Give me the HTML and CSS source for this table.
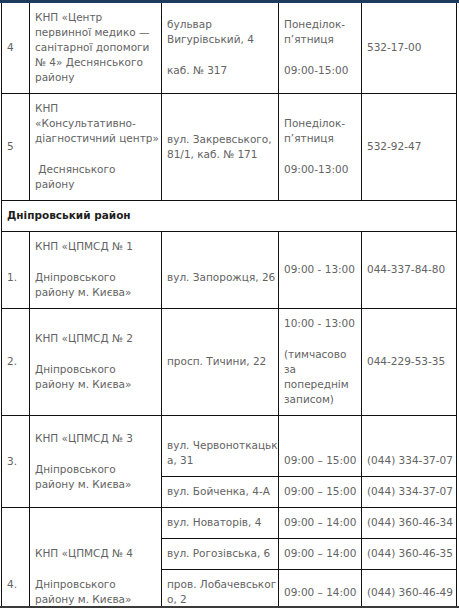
FILE: index.html
```html
<!DOCTYPE html>
<html lang="uk">
<head>
<meta charset="utf-8">
<title>КНП ЦПМСД</title>
<link rel="stylesheet" href="styles.css">
</head>
<body>
<div class="page">
  <div class="band"></div>
  <div class="viewport">
    <table class="clinics">
      <colgroup>
        <col class="c-num">
        <col class="c-name">
        <col class="c-addr">
        <col class="c-time">
        <col class="c-phone">
      </colgroup>
      <tbody>
        <tr class="first">
          <td>4</td>
          <td><p>КНП «Центр<br>первинної медико —<br>санітарної допомоги<br>№ 4» Деснянського<br>району</p></td>
          <td><p>бульвар<br>Вигурівський, 4</p><p>каб. № 317</p></td>
          <td><p>Понеділок-<br>п’ятниця</p><p>09:00-15:00</p></td>
          <td>532-17-00</td>
        </tr>
        <tr>
          <td>5</td>
          <td><p>КНП<br>«Консультативно-<br>діагностичний центр»</p><p>&nbsp;Деснянського<br>району</p></td>
          <td>вул. Закревського,<br>81/1, каб. № 171</td>
          <td><p>Понеділок-<br>п’ятниця</p><p>09:00-13:00</p></td>
          <td>532-92-47</td>
        </tr>
        <tr class="section">
          <td colspan="5">Дніпровський район</td>
        </tr>
        <tr>
          <td class="line-down">1.</td>
          <td><p>КНП «ЦПМСД № 1</p><p>Дніпровського<br>району м. Києва»</p></td>
          <td class="line-down">вул. Запорожця, 26</td>
          <td>09:00 - 13:00</td>
          <td>044-337-84-80</td>
        </tr>
        <tr>
          <td>2.</td>
          <td><p>КНП «ЦПМСД № 2</p><p>Дніпровського<br>району м. Києва»</p></td>
          <td>просп. Тичини, 22</td>
          <td><p>10:00 - 13:00</p><p>(тимчасово<br>за<br>попереднім<br>записом)</p></td>
          <td>044-229-53-35</td>
        </tr>
        <tr>
          <td rowspan="2">3.</td>
          <td rowspan="2"><p>КНП «ЦПМСД № 3</p><p>Дніпровського<br>району м. Києва»</p></td>
          <td class="line-down">вул. Червоноткацьк<br>а, 31</td>
          <td class="to-bottom">09:00 – 15:00</td>
          <td class="to-bottom">(044) 334-37-07</td>
        </tr>
        <tr>
          <td>вул. Бойченка, 4-А</td>
          <td>09:00 – 15:00</td>
          <td>(044) 334-37-07</td>
        </tr>
        <tr>
          <td rowspan="4" class="line-down">4.</td>
          <td rowspan="4"><p>КНП «ЦПМСД № 4</p><p>Дніпровського<br>району м. Києва»</p></td>
          <td>вул. Новаторів, 4</td>
          <td>09:00 – 14:00</td>
          <td>(044) 360-46-34</td>
        </tr>
        <tr>
          <td>вул. Рогозівська, 6</td>
          <td>09:00 – 14:00</td>
          <td>(044) 360-46-35</td>
        </tr>
        <tr>
          <td>пров. Лобачевськог<br>о, 2</td>
          <td>09:00 – 14:00</td>
          <td>(044) 360-46-49</td>
        </tr>
        <tr class="tail">
          <td>&nbsp;</td>
          <td>&nbsp;</td>
          <td>&nbsp;</td>
        </tr>
      </tbody>
    </table>
  </div>
  <div class="edge"></div>
</div>
</body>
</html>
```
FILE: styles.css
```css
html, body {
  margin: 0;
  padding: 0;
  background: #ffffff;
}

.page {
  width: 459px;
  height: 608px;
  display: flex;
  flex-direction: column;
  overflow: hidden;
}

.band {
  height: 3px;
  flex: none;
  background: #1d3b5e;
}

.viewport {
  height: 603px;
  flex: none;
  overflow: hidden;
}

.edge {
  height: 2px;
  flex: none;
  background: #3a3a3a;
}

.clinics {
  margin-left: 1px;
  width: 456px;
  table-layout: fixed;
  border-collapse: collapse;
  font-family: "DejaVu Sans", sans-serif;
  font-size: 10.5px;
  line-height: 15px;
  color: #636363;
}

.c-num { width: 28px; }
.c-name { width: 132px; }
.c-addr { width: 117px; }
.c-time { width: 83px; }
.c-phone { width: 95px; }

.clinics td {
  border: 1px solid #111;
  padding: 7px 5px 8px;
  vertical-align: middle;
  white-space: nowrap;
  overflow: visible;
}

.clinics tr.first td {
  border-top: none;
}

.clinics p {
  margin: 0;
}

.clinics p + p {
  margin-top: 16px;
}

.clinics tr.section td {
  font-weight: bold;
  color: #1e1e1e;
}

.clinics td.line-down {
  padding-top: 22px;
}

.clinics td.to-bottom {
  vertical-align: bottom;
}
```
